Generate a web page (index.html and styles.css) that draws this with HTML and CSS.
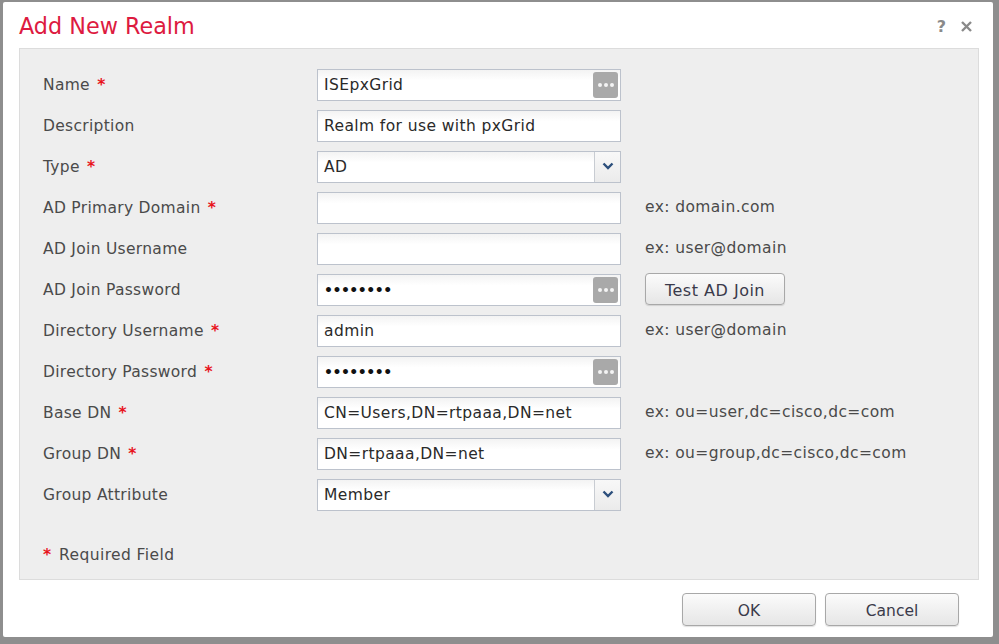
FILE: index.html
```html
<!DOCTYPE html>
<html>
<head>
<meta charset="utf-8">
<link rel="stylesheet" href="styles.css">
</head>
<body>
<div class="screen">
  <div class="dialog">
    <div class="header">
      <h1 class="title">Add New Realm</h1>
      <div class="tools"><span class="help">?</span><svg class="close" width="13" height="13" viewBox="0 0 13 13"><path d="M2 2 L11 11 M11 2 L2 11" stroke="#8a8a8a" stroke-width="2.4" fill="none"/></svg></div>
    </div>
    <div class="panel">
      <div class="form">
        <div class="label">Name <span class="req">*</span></div>
        <div class="input"><span class="val">ISEpxGrid</span><span class="dots"><i></i><i></i><i></i></span></div>
        <div class="hint"></div>

        <div class="label">Description</div>
        <div class="input"><span class="val">Realm for use with pxGrid</span></div>
        <div class="hint"></div>

        <div class="label">Type <span class="req">*</span></div>
        <div class="input select"><span class="val">AD</span><span class="arrow"><svg width="12" height="8" viewBox="0 0 12 8"><path d="M1.5 1.5 L6 6 L10.5 1.5" fill="none" stroke="#2c4f7c" stroke-width="2.4"/></svg></span></div>
        <div class="hint"></div>

        <div class="label">AD Primary Domain <span class="req">*</span></div>
        <div class="input"><span class="val"></span></div>
        <div class="hint">ex: domain.com</div>

        <div class="label">AD Join Username</div>
        <div class="input"><span class="val"></span></div>
        <div class="hint">ex: user@domain</div>

        <div class="label">AD Join Password</div>
        <div class="input"><span class="val pw">&#x2022;&#x2022;&#x2022;&#x2022;&#x2022;&#x2022;&#x2022;&#x2022;</span><span class="dots"><i></i><i></i><i></i></span></div>
        <div class="hint"><button class="btn test">Test AD Join</button></div>

        <div class="label">Directory Username <span class="req">*</span></div>
        <div class="input"><span class="val">admin</span></div>
        <div class="hint">ex: user@domain</div>

        <div class="label">Directory Password <span class="req">*</span></div>
        <div class="input"><span class="val pw">&#x2022;&#x2022;&#x2022;&#x2022;&#x2022;&#x2022;&#x2022;&#x2022;</span><span class="dots"><i></i><i></i><i></i></span></div>
        <div class="hint"></div>

        <div class="label">Base DN <span class="req">*</span></div>
        <div class="input"><span class="val">CN=Users,DN=rtpaaa,DN=net</span></div>
        <div class="hint">ex: ou=user,dc=cisco,dc=com</div>

        <div class="label">Group DN <span class="req">*</span></div>
        <div class="input"><span class="val">DN=rtpaaa,DN=net</span></div>
        <div class="hint">ex: ou=group,dc=cisco,dc=com</div>

        <div class="label">Group Attribute</div>
        <div class="input select"><span class="val">Member</span><span class="arrow"><svg width="12" height="8" viewBox="0 0 12 8"><path d="M1.5 1.5 L6 6 L10.5 1.5" fill="none" stroke="#2c4f7c" stroke-width="2.4"/></svg></span></div>
        <div class="hint"></div>
      </div>
      <div class="required"><span class="req">*</span><span class="reqtext">Required Field</span></div>
    </div>
    <div class="footer">
      <button class="btn big">OK</button>
      <button class="btn big">Cancel</button>
    </div>
  </div>
</div>
</body>
</html>
```
FILE: styles.css
```css
* { box-sizing: border-box; }
html, body { margin: 0; padding: 0; }
body {
  background: #8e8e8e;
  font-family: "DejaVu Sans", Verdana, sans-serif;
  width: 999px;
  height: 644px;
  overflow: hidden;
}
.screen {
  padding: 2px 6px 0 3px;
}
.dialog {
  width: 990px;
  height: 635px;
  background: #ffffff;
  border-radius: 2px;
  display: flex;
  flex-direction: column;
  padding: 0 14px 0 16px;
}
.header {
  height: 46px;
  display: flex;
  align-items: center;
  justify-content: space-between;
}
.title {
  margin: 0;
  font-weight: normal;
  font-size: 22.3px;
  color: #dd1a40;
  padding-top: 2px;
}
.tools {
  display: flex;
  align-items: center;
  gap: 14px;
  color: #8a8a8a;
  font-weight: bold;
  font-size: 16px;
  padding-right: 6px;
  padding-top: 2px;
}
.panel {
  background: #eeeeee;
  border: 1px solid #dcdcdc;
  height: 532px;
  padding: 20px 0 0 23px;
  display: flex;
  flex-direction: column;
}
.form {
  display: grid;
  grid-template-columns: 250px 304px auto;
  column-gap: 24px;
  row-gap: 9px;
  grid-auto-rows: 32px;
  align-items: center;
}
.label {
  font-size: 15.5px;
  letter-spacing: 0.3px;
  color: #4a4a4a;
  padding-bottom: 1px;
}
.label .req { margin-left: 2px; }
.req {
  color: #e8141c;
  font-weight: bold;
}
.input {
  height: 32px;
  border: 1px solid #bcc2cc;
  background: linear-gradient(#f3f3f3, #ffffff 35%);
  display: flex;
  align-items: center;
  padding-left: 6px;
  position: relative;
}
.val {
  font-size: 15.5px;
  letter-spacing: 0.4px;
  color: #2a2a2a;
  flex: 1;
}
.val.pw {
  font-size: 14px;
  letter-spacing: -0.5px;
  color: #111;
  font-weight: bold;
}
.dots {
  width: 25px;
  height: 26px;
  margin-right: 2px;
  background: #a9a9a9;
  border-radius: 3px;
  display: flex;
  align-items: center;
  justify-content: center;
  gap: 2px;
}
.dots i {
  width: 4px;
  height: 4px;
  background: #f4f4f4;
  border-radius: 50%;
}
.select .arrow {
  width: 26px;
  align-self: stretch;
  border-left: 1px solid #c8ccd2;
  background: linear-gradient(#f8f8f8, #ebebeb);
  display: flex;
  align-items: center;
  justify-content: center;
  padding-bottom: 3px;
}
.hint {
  font-size: 15.5px;
  letter-spacing: 0.4px;
  color: #4a4a4a;
  padding-bottom: 2px;
}
.btn {
  font-family: "DejaVu Sans", Verdana, sans-serif;
  font-size: 14.5px;
  color: #3a3a4a;
  border: 1px solid #a8a8a8;
  border-radius: 4px;
  background: linear-gradient(#fbfbfb, #e6e6e6);
  box-shadow: 0 1px 1px rgba(0,0,0,0.12);
  cursor: default;
}
.btn.test {
  width: 140px;
  height: 32px;
  padding-top: 3px;
  font-size: 16px;
  letter-spacing: 0.5px;
}
.required {
  margin-top: 35px;
  font-size: 15.5px;
  color: #4a4a4a;
  display: flex;
  gap: 8px;
}
.reqtext { letter-spacing: 0.4px; }
.footer {
  display: flex;
  justify-content: flex-end;
  gap: 9px;
  padding: 13px 20px 0 0;
}
.btn.big {
  width: 134px;
  height: 33px;
  font-size: 15.5px;
  padding-top: 3px;
}
```
